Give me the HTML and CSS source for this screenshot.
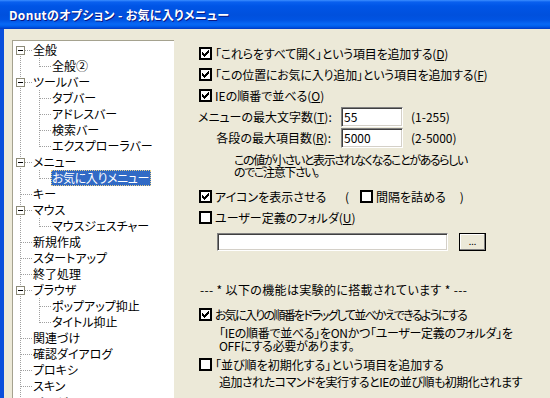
FILE: index.html
```html
<!DOCTYPE html>
<html lang="ja">
<head>
    <meta charset="UTF-8">
    <title>Donutのオプション - お気に入りメニュー</title>
    <link rel="stylesheet" href="styles.css">
</head>
<body>
    <div class="window">
        <div class="titlebar">
            <span class="title">Donutのオプション - お気に入りメニュー</span>
        </div>

        <div class="frame">
            <div class="tree">
                <div class="node"><span class="c top"><span class="box"></span></span><span class="lab">全般</span></div>
                <div class="node"><span class="c line"></span><span class="c end"></span><span class="lab">全般②</span></div>
                <div class="node"><span class="c tee"><span class="box"></span></span><span class="lab">ツールバー</span></div>
                <div class="node"><span class="c line"></span><span class="c tee"></span><span class="lab">タブバー</span></div>
                <div class="node"><span class="c line"></span><span class="c tee"></span><span class="lab">アドレスバー</span></div>
                <div class="node"><span class="c line"></span><span class="c tee"></span><span class="lab">検索バー</span></div>
                <div class="node"><span class="c line"></span><span class="c end"></span><span class="lab">エクスプローラバー</span></div>
                <div class="node"><span class="c tee"><span class="box"></span></span><span class="lab">メニュー</span></div>
                <div class="node"><span class="c line"></span><span class="c end"></span><span class="lab sel">お気に入りメニュー</span></div>
                <div class="node"><span class="c tee"></span><span class="lab">キー</span></div>
                <div class="node"><span class="c tee"><span class="box"></span></span><span class="lab">マウス</span></div>
                <div class="node"><span class="c line"></span><span class="c end"></span><span class="lab">マウスジェスチャー</span></div>
                <div class="node"><span class="c tee"></span><span class="lab">新規作成</span></div>
                <div class="node"><span class="c tee"></span><span class="lab">スタートアップ</span></div>
                <div class="node"><span class="c tee"></span><span class="lab">終了処理</span></div>
                <div class="node"><span class="c tee"><span class="box"></span></span><span class="lab">ブラウザ</span></div>
                <div class="node"><span class="c line"></span><span class="c tee"></span><span class="lab">ポップアップ抑止</span></div>
                <div class="node"><span class="c line"></span><span class="c end"></span><span class="lab">タイトル抑止</span></div>
                <div class="node"><span class="c tee"></span><span class="lab">関連づけ</span></div>
                <div class="node"><span class="c tee"></span><span class="lab">確認ダイアログ</span></div>
                <div class="node"><span class="c tee"></span><span class="lab">プロキシ</span></div>
                <div class="node"><span class="c tee"></span><span class="lab">スキン</span></div>
                <div class="node"><span class="c tee"></span><span class="lab">ページ</span></div>
            </div>

            <div class="page">
                <div class="row">
                    <span class="cb"><svg viewBox="0 0 9 9"><polygon points="1,3 2,3 2,4 3,4 3,5 4,5 4,4 5,4 5,3 6,3 6,2 7,2 7,1 8,1 8,4 7,4 7,5 6,5 6,6 5,6 5,7 4,7 4,8 3,8 3,7 2,7 2,6 1,6"/></svg></span>
                    <span class="tight">「これらをすべて開く」という項目を追加する(<u>D</u>)</span>
                </div>
                <div class="row">
                    <span class="cb"><svg viewBox="0 0 9 9"><polygon points="1,3 2,3 2,4 3,4 3,5 4,5 4,4 5,4 5,3 6,3 6,2 7,2 7,1 8,1 8,4 7,4 7,5 6,5 6,6 5,6 5,7 4,7 4,8 3,8 3,7 2,7 2,6 1,6"/></svg></span>
                    <span class="tight">「この位置にお気に入り追加」という項目を追加する(<u>F</u>)</span>
                </div>
                <div class="row">
                    <span class="cb"><svg viewBox="0 0 9 9"><polygon points="1,3 2,3 2,4 3,4 3,5 4,5 4,4 5,4 5,3 6,3 6,2 7,2 7,1 8,1 8,4 7,4 7,5 6,5 6,6 5,6 5,7 4,7 4,8 3,8 3,7 2,7 2,6 1,6"/></svg></span>
                    <span>IEの順番で並べる(<u>O</u>)</span>
                </div>

                <div class="field">
                    <span class="field-label">メニューの最大文字数(<u>T</u>):</span>
                    <input class="edit num" type="text" value="55">
                    <span class="range">(1-255)</span>
                </div>
                <div class="field">
                    <span class="field-label">各段の最大項目数(<u>R</u>):</span>
                    <input class="edit num" type="text" value="5000">
                    <span class="range">(2-5000)</span>
                </div>

                <div class="note note-limit">この値が小さいと表示されなくなることがあるらしい<br>のでご注意下さい。</div>

                <div class="row row-icon">
                    <span class="cb"><svg viewBox="0 0 9 9"><polygon points="1,3 2,3 2,4 3,4 3,5 4,5 4,4 5,4 5,3 6,3 6,2 7,2 7,1 8,1 8,4 7,4 7,5 6,5 6,6 5,6 5,7 4,7 4,8 3,8 3,7 2,7 2,6 1,6"/></svg></span>
                    <span class="icon-label">アイコンを表示させる</span>
                    <span class="paren">(</span>
                    <span class="cb"></span>
                    <span>間隔を詰める</span>
                    <span class="paren-close">)</span>
                </div>
                <div class="row">
                    <span class="cb"></span>
                    <span>ユーザー定義のフォルダ(<u>U</u>)</span>
                </div>

                <div class="folder">
                    <input class="edit path" type="text" value="">
                    <button class="browse" type="button">...</button>
                </div>

                <div class="caption">--- * 以下の機能は実験的に搭載されています * ---</div>

                <div class="row row-drag">
                    <span class="cb"><svg viewBox="0 0 9 9"><polygon points="1,3 2,3 2,4 3,4 3,5 4,5 4,4 5,4 5,3 6,3 6,2 7,2 7,1 8,1 8,4 7,4 7,5 6,5 6,6 5,6 5,7 4,7 4,8 3,8 3,7 2,7 2,6 1,6"/></svg></span>
                    <span class="drag-label">お気に入りの順番をドラッグして並べかえできるようにする</span>
                </div>
                <div class="note note-sub">「IEの順番で並べる」をONかつ「ユーザー定義のフォルダ」を<br>OFFにする必要があります。</div>

                <div class="row row-reset">
                    <span class="cb"></span>
                    <span>「並び順を初期化する」という項目を追加する</span>
                </div>
                <div class="note note-sub note-last">追加されたコマンドを実行するとIEの並び順も初期化されます</div>
            </div>
        </div>
    </div>
</body>
</html>
```

FILE: styles.css
```css
body {
    margin: 0;
    font-family: "Noto Sans CJK JP", "Noto Sans", sans-serif;
    font-size: 12px;
    font-feature-settings: "palt";
    color: #000;
    background-color: #ece9d8;
    overflow: hidden;
}
.window {
    width: 550px;
    height: 398px;
    display: flex;
    flex-direction: column;
    overflow: hidden;
}
.titlebar {
    flex: none;
    height: 29px;
    display: flex;
    align-items: center;
    padding-left: 9px;
    background: linear-gradient(#3c8eff 0, #0a60ef 2px, #0055e6 6px, #0050dd 15px, #0054e3 20px, #0868f5 24px, #0061ef 26px, #0047d6 28px, #003bbf 29px);
}
.title {
    color: #fff;
    font-weight: bold;
    font-size: 12px;
    letter-spacing: 0.3px;
    text-shadow: 1px 1px #0a1883;
}
.frame {
    flex: 1;
    min-height: 0;
    display: flex;
    border-left: 4px solid #0a4fdc;
    background-color: #ece9d8;
}

/* tree view */
.tree {
    --v: repeating-linear-gradient(#a0a0a0 0 1px, transparent 1px 2px);
    --h: repeating-linear-gradient(to right, #a0a0a0 0 1px, transparent 1px 2px);
    flex: none;
    width: 162px;
    margin: 11px 0 0 8px;
    padding-top: 1px;
    box-sizing: border-box;
    background-color: #fff;
    border-top: 1px solid #a5a28f;
    border-left: 1px solid #a5a28f;
    overflow: hidden;
}
.node {
    display: flex;
    height: 16px;
}
.c {
    flex: none;
    width: 19px;
    height: 16px;
    background-repeat: no-repeat;
}
.c.line {
    background-image: var(--v);
    background-size: 1px 16px;
    background-position: 7px 0;
}
.c.tee {
    background-image: var(--v), var(--h);
    background-size: 1px 16px, 11px 1px;
    background-position: 7px 0, 8px 8px;
}
.c.end {
    background-image: var(--v), var(--h);
    background-size: 1px 9px, 11px 1px;
    background-position: 7px 0, 8px 8px;
}
.c.top {
    background-image: var(--v), var(--h);
    background-size: 1px 8px, 11px 1px;
    background-position: 7px 8px, 8px 8px;
}
.box {
    display: block;
    width: 9px;
    height: 9px;
    margin: 4px 0 0 3px;
    box-sizing: border-box;
    border: 1px solid #8c8a78;
    background: #fff linear-gradient(#000, #000) no-repeat center / 5px 1px;
}
.lab {
    line-height: 16px;
    padding: 0 2px 0 1px;
    white-space: nowrap;
}
.sel {
    background-color: #316ac5;
    color: #fff;
    letter-spacing: -0.4px;
    outline: 1px dotted #e8d08a;
    outline-offset: -1px;
}

/* option page */
.page {
    flex: 1;
    margin-left: 25px;
    padding-top: 14px;
    white-space: nowrap;
}
.row {
    display: flex;
    align-items: center;
    height: 21px;
}
.tight {
    letter-spacing: -0.2px;
}
.cb {
    flex: none;
    width: 13px;
    height: 13px;
    box-sizing: border-box;
    border: 2px solid #000;
    background-color: #fff;
    margin-right: 3px;
}
.cb svg {
    display: block;
    width: 9px;
    height: 9px;
    shape-rendering: crispEdges;
}
.field {
    display: flex;
    align-items: center;
    height: 21px;
    margin-left: -1px;
}
.field-label {
    width: 133px;
    text-align: right;
}
.edit {
    box-sizing: border-box;
    font: inherit;
    color: #000;
    background-color: #fff;
    border-top: 1px solid #808080;
    border-left: 1px solid #808080;
    border-right: 1px solid #fff;
    border-bottom: 1px solid #fff;
    box-shadow: inset 1px 1px #404040, inset -1px -1px #d4d0c8;
    outline: none;
}
.num {
    width: 62px;
    height: 20px;
    margin-left: 10px;
    padding: 0 2px;
}
.range {
    margin-left: 8px;
}
.note {
    line-height: 12px;
}
.note-limit {
    margin: 6px 0 0 35px;
    letter-spacing: -1.4px;
}
.row-icon {
    margin-top: 8px;
}
.icon-label {
    width: 130px;
}
.paren {
    width: 15px;
}
.paren-close {
    margin-left: 14px;
}
.folder {
    display: flex;
    margin: 5px 0 0 18px;
}
.path {
    width: 231px;
    height: 18px;
}
.browse {
    width: 27px;
    height: 18px;
    margin-left: 11px;
    padding: 0;
    font: inherit;
    font-size: 9px;
    line-height: 14px;
    background-color: #ece9d8;
    border: 1px solid #000;
    box-shadow: inset -1px -1px #808080, inset 1px 1px #fff;
}
.caption {
    margin: 32px 0 0 1px;
    line-height: 14px;
    letter-spacing: 0.35px;
}
.row-drag {
    margin-top: 7px;
}
.drag-label {
    letter-spacing: -1.7px;
}
.note-sub {
    margin: 1px 0 0 20px;
    line-height: 13px;
    letter-spacing: -0.3px;
}
.note-last {
    margin-top: 0;
    letter-spacing: -0.5px;
}
.row-reset {
    margin-top: 2px;
}
```
